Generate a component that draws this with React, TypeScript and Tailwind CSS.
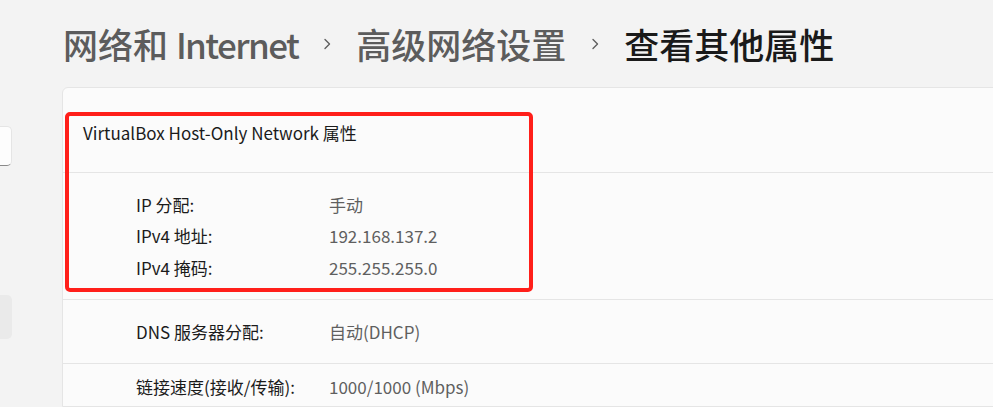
import type { ReactNode } from 'react';

const font = "font-['Noto_Sans_CJK_SC','Noto_Sans',sans-serif]";

function Chevron() {
  return (
    <svg width="8" height="12" viewBox="0 0 8 12" className="mx-[25px] shrink-0" fill="none">
      <path d="M2 1.5 L6.5 6 L2 10.5" stroke="#5f5f5f" strokeWidth="1.4" strokeLinecap="round" strokeLinejoin="round" />
    </svg>
  );
}

function Row({ label, value, className }: { label: string; value: ReactNode; className?: string }) {
  return (
    <div className={`flex items-center ${className ?? ''}`}>
      <span className="w-[193px] shrink-0 text-[#1b1b1b]">{label}</span>
      <span className="text-[#5f5f5f]">{value}</span>
    </div>
  );
}

function App() {
  return (
    <div className={`flex h-screen w-full overflow-hidden bg-[#f3f3f3] ${font}`}>
      {/* sidebar, mostly scrolled off to the left */}
      <aside className="-ml-[288px] w-[300px] shrink-0 pt-[126px]">
        <div className="h-[40px] rounded-[5px] border border-[#e5e5e5] border-b-[#8a8a8a] bg-[#fdfdfd]" />
        <div className="mt-[129px] h-[44px] rounded-[5px] bg-[#eaeaea]" />
      </aside>

      <main className="ml-[50px] flex min-w-0 flex-1 flex-col">
        {/* Breadcrumb */}
        <header className="flex h-[87px] shrink-0 items-center pl-[1px] text-[35px] font-medium leading-[48px]">
          <span className="text-[#5c5c5c]">
            网络和 <span className="tracking-[-1.6px]">Internet</span>
          </span>
          <Chevron />
          <span className="text-[#5c5c5c]">高级网络设置</span>
          <Chevron />
          <span className="text-[#1a1a1a]">查看其他属性</span>
        </header>

        {/* Properties card */}
        <section className="-mr-[20px] flex-1 rounded-t-[6px] border border-[#e5e5e5] bg-[#fbfbfb] text-[17px] leading-[24px]">
          <div className="relative">
            <div className="h-[85px] border-b border-[#e5e5e5] pl-[20px] pt-[33px] text-[#1b1b1b]">
              VirtualBox Host-Only Network 属性
            </div>
            <div className="h-[127px] border-b border-[#e5e5e5] pl-[73px] pt-[16px]">
              <Row className="h-[31.5px]" label="IP 分配:" value="手动" />
              <Row className="h-[31.5px]" label="IPv4 地址:" value="192.168.137.2" />
              <Row className="h-[31.5px]" label="IPv4 掩码:" value="255.255.255.0" />
            </div>
            {/* annotation box */}
            <div className="pointer-events-none absolute left-[2px] top-[24px] h-[180px] w-[468px] rounded-[5px] border-[4px] border-[#ff1f1a]" />
          </div>
          <div className="flex h-[64px] items-center border-b border-[#e5e5e5] pl-[73px] pt-[1px]">
            <Row label="DNS 服务器分配:" value="自动(DHCP)" />
          </div>
          <div className="pl-[73px] pt-[11px]">
            <Row label="链接速度(接收/传输):" value="1000/1000 (Mbps)" />
          </div>
        </section>
      </main>
    </div>
  );
}

export default App;
